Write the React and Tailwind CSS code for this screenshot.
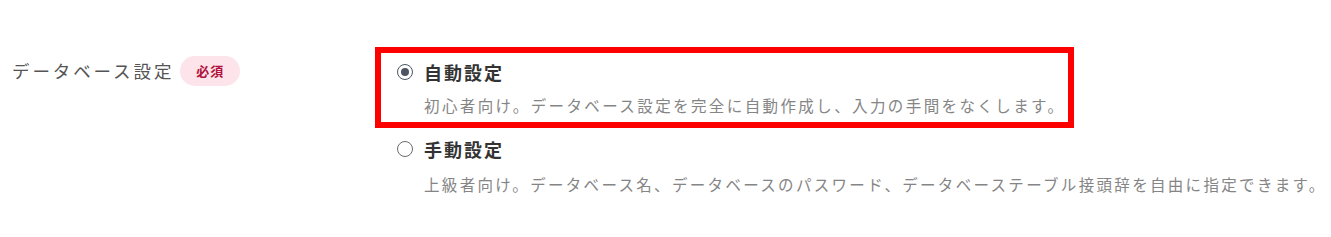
import { useState } from "react";

const options = [
    {
        id: "auto",
        label: "自動設定",
        desc: "初心者向け。データベース設定を完全に自動作成し、入力の手間をなくします。",
    },
    {
        id: "manual",
        label: "手動設定",
        desc: "上級者向け。データベース名、データベースのパスワード、データベーステーブル接頭辞を自由に指定できます。",
    },
];

function Radio({ checked }) {
    return (
        <span
            className={
                "flex h-4 w-4 shrink-0 items-center justify-center rounded-full border-[1.5px] " +
                (checked ? "border-[#4b5563]" : "border-[#6b6b6b]")
            }
        >
            {checked && <span className="h-2 w-2 rounded-full bg-[#4b5563]" />}
        </span>
    );
}

export default function App() {
    const [value, setValue] = useState("auto");

    return (
        <div
            className="flex h-[237px] w-full overflow-hidden bg-white pl-3 pt-[47px]"
            style={{ fontFamily: '"Noto Sans CJK JP", "Noto Sans", sans-serif' }}
        >
            {/* Label */}
            <div className="flex h-[48px] w-[363px] shrink-0 items-center gap-[6px]">
                <span className="text-[17.5px] leading-6 tracking-[2.9px] text-[#555]">
                    データベース設定
                </span>
                <span className="flex h-[30px] items-center rounded-full bg-[#fde4ea] px-[16px] text-[13px] font-bold tracking-[1px] text-[#b0123f]">
                    必須
                </span>
            </div>

            {/* Options */}
            <div className="flex shrink-0 flex-col items-start">
                {options.map((opt, i) => {
                    const active = i === 0;
                    return (
                        <label
                            key={opt.id}
                            onClick={() => setValue(opt.id)}
                            className={
                                "block cursor-pointer border-[6px] pl-4 pr-[3px] " +
                                (active
                                    ? "border-[#ff0000] pb-[5px] pt-[7px]"
                                    : "-mt-[4px] border-transparent pt-[7px]")
                            }
                        >
                            <div className="flex h-6 items-center gap-[11px]">
                                <Radio checked={value === opt.id} />
                                <span className="text-[18px] font-bold tracking-[2px] text-[#333]">
                                    {opt.label}
                                </span>
                            </div>
                            <p
                                className={
                                    "whitespace-nowrap pl-[27px] text-[15.5px] leading-6 text-[#858585] " +
                                    (active ? "mt-[9px] tracking-[2.4px]" : "mt-[11px] tracking-[2.32px]")
                                }
                            >
                                {opt.desc}
                            </p>
                        </label>
                    );
                })}
            </div>
        </div>
    );
}
